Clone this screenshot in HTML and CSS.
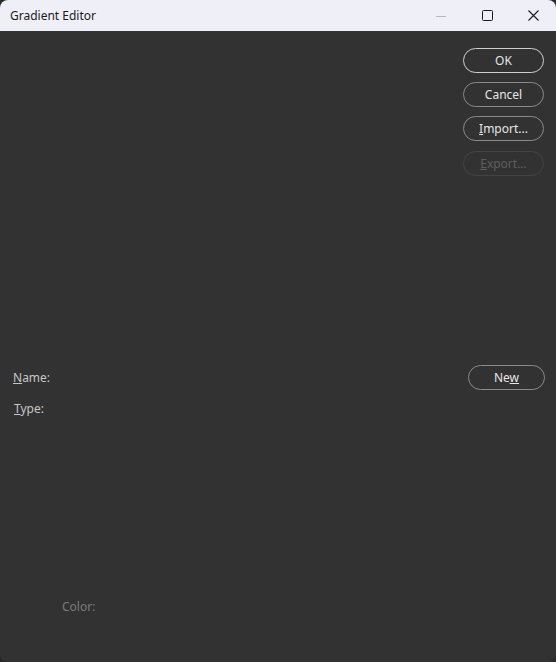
FILE: index.html
```html
<!DOCTYPE html>
<html>
  <head>
    <title>Gradient Editor</title>
    <link rel="stylesheet" href="styles.css">
  </head>
  <body>
    <div class="window">
      <div class="titlebar">
        <div class="title">Gradient Editor</div>
        <div class="controls">
          <div class="control disabled">
            <svg width="10" height="10" viewBox="0 0 10 10"><path d="M0 5.5h10" stroke="#b8b8b8" stroke-width="1"/></svg>
          </div>
          <div class="control">
            <svg width="11" height="11" viewBox="0 0 11 11"><rect x="0.5" y="0.5" width="10" height="10" rx="1" fill="none" stroke="#1a1a1a" stroke-width="1"/></svg>
          </div>
          <div class="control">
            <svg width="11" height="11" viewBox="0 0 11 11"><path d="M0.5 0.5l10 10M10.5 0.5l-10 10" stroke="#1a1a1a" stroke-width="1.1"/></svg>
          </div>
        </div>
      </div>

      <div class="content">
        <div class="actions">
          <button class="btn default">OK</button>
          <button class="btn">Cancel</button>
          <button class="btn"><u>I</u>mport...</button>
          <button class="btn disabled"><u>E</u>xport...</button>
        </div>

        <div class="row name-row">
          <span class="label"><u>N</u>ame:</span>
          <button class="btn new">Ne<u>w</u></button>
        </div>
        <div class="row type-row">
          <span class="label type"><u>T</u>ype:</span>
        </div>

        <div class="color-row">
          <span class="label muted">Color:</span>
        </div>
      </div>
    </div>
  </body>
</html>
```

FILE: styles.css
```css
html {
  height: 100%;
}

body {
  margin: 0;
  height: 100%;
  background: #2a2a2a;
  font-family: "Noto Sans", "Open Sans", sans-serif;
}

.window {
  display: flex;
  flex-direction: column;
  height: 662px;
  border-radius: 8px;
  overflow: hidden;
  background: #323232;
}

.titlebar {
  display: flex;
  justify-content: space-between;
  align-items: center;
  height: 31px;
  background: #eff0f7;
}

.title {
  padding-left: 10px;
  font-size: 12px;
  color: #1a1a1a;
}

.controls {
  display: flex;
  height: 100%;
}

.control {
  display: flex;
  justify-content: center;
  align-items: center;
  width: 46px;
  height: 100%;
}

.content {
  flex: 1;
  display: flex;
  flex-direction: column;
  padding: 17px 12px 0 13px;
}

.actions {
  display: flex;
  flex-direction: column;
  align-items: flex-end;
  gap: 9px;
}

.btn {
  width: 81px;
  height: 25px;
  padding: 0;
  border: 1px solid #8a8a8a;
  border-radius: 13px;
  background: transparent;
  color: #e6e6e6;
  font-family: "Noto Sans", "Open Sans", sans-serif;
  font-size: 12px;
}

.btn.default {
  border-color: #cfcfcf;
}

.btn.disabled {
  border-color: #444444;
  color: #5e5e5e;
  margin-top: 1px;
}

.btn.new {
  width: 77px;
  margin-right: -1px;
}

.row {
  display: flex;
  justify-content: space-between;
  align-items: center;
}

.name-row {
  margin-top: 189px;
  height: 25px;
}

.type-row {
  margin-top: 6px;
  height: 25px;
}

.label {
  font-size: 12px;
  color: #c6c6c6;
}

.label.type {
  padding-left: 1px;
}

.label.muted {
  color: #7a7a7a;
}

.color-row {
  margin-top: 173px;
  padding-left: 49px;
}
```
